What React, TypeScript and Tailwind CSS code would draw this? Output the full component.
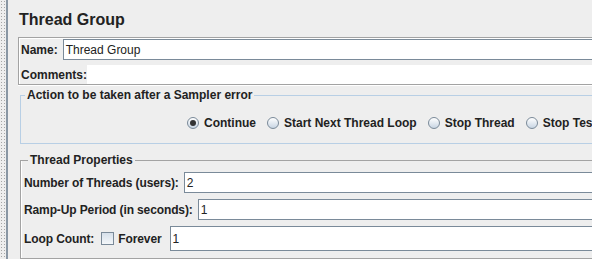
import React from "react";

const label = "text-[12px] font-bold leading-[14px] text-[#222] whitespace-nowrap";

function Radio({ checked, text }: { checked?: boolean; text: string }) {
    return (
        <div className="flex items-center gap-[5px]">
            <span className="flex h-[12px] w-[12px] items-center justify-center rounded-full border border-[#7a8a99] bg-gradient-to-b from-white to-[#c8d5e3]">
                {checked && <span className="h-[6px] w-[6px] rounded-full bg-[#333]" />}
            </span>
            <span className={label}>{text}</span>
        </div>
    );
}

function Field({ value, tall }: { value: string; tall?: boolean }) {
    return (
        <div
            className={`flex flex-1 items-center border border-[#7a8a99] bg-white pl-[2px] text-[12px] text-[#222] ${
                tall ? "h-[25px]" : "h-[21px]"
            }`}
        >
            {value}
        </div>
    );
}

export default function App() {
    return (
        <div className="flex h-[259px] w-[592px] overflow-hidden bg-[#eeeeee] font-['Liberation_Sans',Arial,sans-serif]">
            {/* split pane divider */}
            <div className="h-full w-[6px] shrink-0 bg-[radial-gradient(circle,#a6a6a6_0.7px,transparent_0.9px)] bg-[size:3px_3px]" />
            <div className="h-full w-[2px] shrink-0 bg-[#8a97a4]" />

            <div className="flex w-[900px] shrink-0 flex-col">
                <h1 className="ml-[11px] mt-[10px] h-[20px] text-[16px] font-bold leading-[20px] text-[#222]">
                    Thread Group
                </h1>

                {/* name + comments */}
                <div className="ml-[10px] mt-[7px] flex flex-col gap-[5px] border border-[#a3a3a3] pl-[2px] pt-[1px] shadow-[inset_1px_1px_0_#fff,0_1px_0_#fff]">
                    <div className="flex items-center gap-[5px]">
                        <span className={label}>Name:</span>
                        <Field value="Thread Group" />
                    </div>
                    <div className="flex h-[19px] items-center">
                        <span className={label}>Comments:</span>
                        <div className="h-full flex-1 bg-white" />
                    </div>
                </div>

                {/* sampler error action */}
                <fieldset className="ml-[12px] mt-[3px] border border-[#b8cfe5] pb-[10px] pt-[11px]">
                    <legend className={`${label} ml-[4px] px-[2px]`}>
                        Action to be taken after a Sampler error
                    </legend>
                    <div className="flex h-[20px] items-center gap-[11px] pl-[166px]">
                        <Radio checked text="Continue" />
                        <Radio text="Start Next Thread Loop" />
                        <Radio text="Stop Thread" />
                        <Radio text="Stop Test" />
                    </div>
                </fieldset>

                {/* thread properties */}
                <fieldset className="ml-[12px] mt-[9px] flex-1 border border-[#a3a3a3] pl-[3px] pt-[5px] shadow-[inset_1px_0_0_#fff]">
                    <legend className={`${label} ml-[4px] px-[2px]`}>Thread Properties</legend>
                    <div className="flex flex-col gap-[6px]">
                        <div className="flex items-center gap-[5px]">
                            <span className={`${label} tracking-[-0.1px]`}>Number of Threads (users):</span>
                            <Field value="2" />
                        </div>
                        <div className="flex items-center gap-[5px]">
                            <span className={`${label} tracking-[-0.12px]`}>Ramp-Up Period (in seconds):</span>
                            <Field value="1" />
                        </div>
                        <div className="flex items-center">
                            <span className={`${label} tracking-[-0.1px]`}>Loop Count:</span>
                            <span className="ml-[7px] h-[13px] w-[13px] border border-[#7a8a99] bg-gradient-to-b from-[#d6e0ea] to-[#f4f7fa]" />
                            <span className={`${label} ml-[4px] tracking-[-0.1px]`}>Forever</span>
                            <div className="ml-[8px] flex flex-1">
                                <Field value="1" tall />
                            </div>
                        </div>
                    </div>
                </fieldset>
            </div>
        </div>
    );
}
